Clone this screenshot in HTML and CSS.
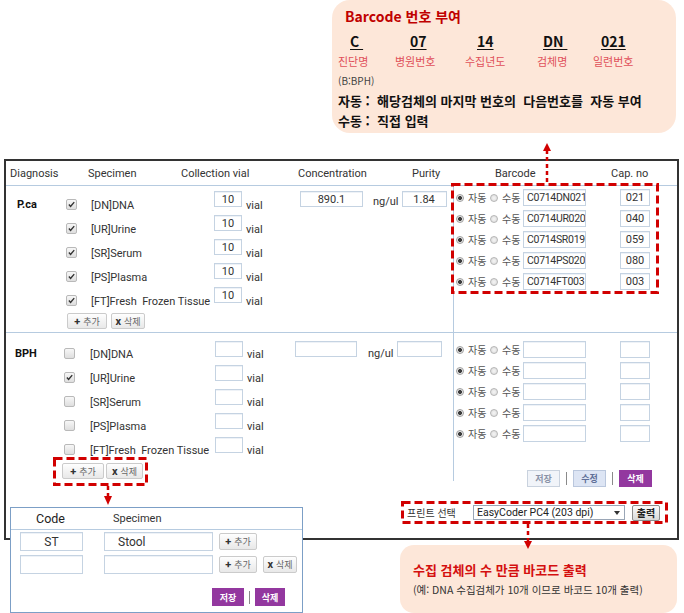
FILE: index.html
```html
<!DOCTYPE html>
<html lang="ko">
<head>
<meta charset="utf-8">
<title>Barcode 등록</title>
<link rel="stylesheet" href="styles.css">
</head>
<body>
<div class="page">
  <div class="callout-top">
    <div class="ct-title">Barcode 번호 부여</div>
    <div class="code-grid">
      <span class="code k1">C&nbsp;</span>
      <span class="code k2">07</span>
      <span class="code k3">14</span>
      <span class="code k4">DN&nbsp;</span>
      <span class="code k5">021</span>
      <span class="lbl">진단명</span>
      <span class="lbl">병원번호</span>
      <span class="lbl">수집년도</span>
      <span class="lbl">검체명</span>
      <span class="lbl">일련번호</span>
    </div>
    <div class="note">(B:BPH)</div>
    <div class="rule">자동 :  해당검체의 마지막 번호의  다음번호를  자동 부여</div>
    <div class="rule">수동 :  직접 입력</div>
  </div>

  <div class="frame">
    <div class="head">
      <span class="h-diag">Diagnosis</span>
      <span class="h-spec">Specimen</span>
      <span class="h-vial">Collection vial</span>
      <span class="h-conc">Concentration</span>
      <span class="h-pur">Purity</span>
      <span class="h-bc">Barcode</span>
      <span class="h-cap">Cap. no</span>
    </div>

    <div class="sec sec-pca">
      <div class="spec spec-pca">
        <div class="srow">
          <span class="cell diag">P.ca</span>
          <span class="cell"><span class="cb on"><svg viewBox="0 0 11 11"><path d="M2.3 5.6 L4.4 8 L8.8 2.6"/></svg></span></span>
          <span class="cell sname">[DN]DNA</span>
          <span class="cell vial"><input class="inp vin" value="10"><span class="unit">vial</span></span>
          <span class="cell conc"><input class="inp cin" value="890.1"><span class="ngul">ng/ul</span><input class="inp pin" value="1.84"></span>
        </div>
        <div class="srow">
          <span class="cell diag"></span>
          <span class="cell"><span class="cb on"><svg viewBox="0 0 11 11"><path d="M2.3 5.6 L4.4 8 L8.8 2.6"/></svg></span></span>
          <span class="cell sname">[UR]Urine</span>
          <span class="cell vial"><input class="inp vin" value="10"><span class="unit">vial</span></span>
        </div>
        <div class="srow">
          <span class="cell diag"></span>
          <span class="cell"><span class="cb on"><svg viewBox="0 0 11 11"><path d="M2.3 5.6 L4.4 8 L8.8 2.6"/></svg></span></span>
          <span class="cell sname">[SR]Serum</span>
          <span class="cell vial"><input class="inp vin" value="10"><span class="unit">vial</span></span>
        </div>
        <div class="srow">
          <span class="cell diag"></span>
          <span class="cell"><span class="cb on"><svg viewBox="0 0 11 11"><path d="M2.3 5.6 L4.4 8 L8.8 2.6"/></svg></span></span>
          <span class="cell sname">[PS]Plasma</span>
          <span class="cell vial"><input class="inp vin" value="10"><span class="unit">vial</span></span>
        </div>
        <div class="srow">
          <span class="cell diag"></span>
          <span class="cell"><span class="cb on"><svg viewBox="0 0 11 11"><path d="M2.3 5.6 L4.4 8 L8.8 2.6"/></svg></span></span>
          <span class="cell sname">[FT]Fresh&nbsp; Frozen Tissue</span>
          <span class="cell vial"><input class="inp vin" value="10"><span class="unit">vial</span></span>
        </div>
        <div class="btnrow">
          <span class="gbtn add"><b>+</b>추가</span>
          <span class="gbtn del"><b>x</b>삭제</span>
        </div>
      </div>
      <div class="bc bc-pca">
        <div class="bcrow"><span class="radio on"></span><span class="rl">자동</span><span class="radio"></span><span class="rl">수동</span><input class="inp bin" value="C0714DN021"><input class="inp capin" value="021"></div>
        <div class="bcrow"><span class="radio on"></span><span class="rl">자동</span><span class="radio"></span><span class="rl">수동</span><input class="inp bin" value="C0714UR020"><input class="inp capin" value="040"></div>
        <div class="bcrow"><span class="radio on"></span><span class="rl">자동</span><span class="radio"></span><span class="rl">수동</span><input class="inp bin" value="C0714SR019"><input class="inp capin" value="059"></div>
        <div class="bcrow"><span class="radio on"></span><span class="rl">자동</span><span class="radio"></span><span class="rl">수동</span><input class="inp bin" value="C0714PS020"><input class="inp capin" value="080"></div>
        <div class="bcrow"><span class="radio on"></span><span class="rl">자동</span><span class="radio"></span><span class="rl">수동</span><input class="inp bin" value="C0714FT003"><input class="inp capin" value="003"></div>
      </div>
    </div>

    <div class="sec-bph">
      <div class="bph-top">
        <div class="spec spec-bph">
          <div class="srow">
            <span class="cell diag">BPH</span>
            <span class="cell"><span class="cb"></span></span>
            <span class="cell sname">[DN]DNA</span>
            <span class="cell vial"><input class="inp vin" value=""><span class="unit">vial</span></span>
            <span class="cell conc"><input class="inp cin" value=""><span class="ngul">ng/ul</span><input class="inp pin" value=""></span>
          </div>
          <div class="srow">
            <span class="cell diag"></span>
            <span class="cell"><span class="cb on"><svg viewBox="0 0 11 11"><path d="M2.3 5.6 L4.4 8 L8.8 2.6"/></svg></span></span>
            <span class="cell sname">[UR]Urine</span>
            <span class="cell vial"><input class="inp vin" value=""><span class="unit">vial</span></span>
          </div>
          <div class="srow">
            <span class="cell diag"></span>
            <span class="cell"><span class="cb"></span></span>
            <span class="cell sname">[SR]Serum</span>
            <span class="cell vial"><input class="inp vin" value=""><span class="unit">vial</span></span>
          </div>
          <div class="srow">
            <span class="cell diag"></span>
            <span class="cell"><span class="cb"></span></span>
            <span class="cell sname">[PS]Plasma</span>
            <span class="cell vial"><input class="inp vin" value=""><span class="unit">vial</span></span>
          </div>
          <div class="srow">
            <span class="cell diag"></span>
            <span class="cell"><span class="cb"></span></span>
            <span class="cell sname">[FT]Fresh&nbsp; Frozen Tissue</span>
            <span class="cell vial"><input class="inp vin" value=""><span class="unit">vial</span></span>
          </div>
          <div class="btnrow">
            <span class="gbtn add"><b>+</b>추가</span>
            <span class="gbtn del"><b>x</b>삭제</span>
          </div>
        </div>
        <div class="bc bc-bph">
          <div class="bcrow"><span class="radio on"></span><span class="rl">자동</span><span class="radio"></span><span class="rl">수동</span><input class="inp bin" value=""><input class="inp capin" value=""></div>
          <div class="bcrow"><span class="radio on"></span><span class="rl">자동</span><span class="radio"></span><span class="rl">수동</span><input class="inp bin" value=""><input class="inp capin" value=""></div>
          <div class="bcrow"><span class="radio on"></span><span class="rl">자동</span><span class="radio"></span><span class="rl">수동</span><input class="inp bin" value=""><input class="inp capin" value=""></div>
          <div class="bcrow"><span class="radio on"></span><span class="rl">자동</span><span class="radio"></span><span class="rl">수동</span><input class="inp bin" value=""><input class="inp capin" value=""></div>
          <div class="bcrow"><span class="radio on"></span><span class="rl">자동</span><span class="radio"></span><span class="rl">수동</span><input class="inp bin" value=""><input class="inp capin" value=""></div>
          <div class="actions">
            <span class="abtn save">저장</span>
            <span class="sep"></span>
            <span class="abtn edit">수정</span>
            <span class="sep"></span>
            <span class="abtn remove">삭제</span>
          </div>
        </div>
      </div>
      <div class="print">
        <span class="plabel">프린트 선택</span>
        <span class="sel">EasyCoder PC4 (203 dpi)<span class="caret"></span></span>
        <span class="obtn">출력</span>
      </div>
    </div>
  </div>

  <div class="callout-bottom">
    <div class="cb-title">수집 검체의 수 만큼 바코드 출력</div>
    <div class="cb-sub">(예: DNA 수집검체가 10개 이므로 바코드 10개 출력)</div>
  </div>

  <div class="popup">
    <div class="pop-head">
      <span class="ph-code">Code</span>
      <span class="ph-spec">Specimen</span>
    </div>
    <div class="pop-row">
      <input class="inp pcode" value="ST">
      <input class="inp pspec" value="Stool">
      <span class="gbtn padd"><b>+</b>추가</span>
    </div>
    <div class="pop-row">
      <input class="inp pcode" value="">
      <input class="inp pspec" value="">
      <span class="gbtn padd"><b>+</b>추가</span>
      <span class="gbtn pdel"><b>x</b>삭제</span>
    </div>
    <div class="pop-actions">
      <span class="abtn remove psave">저장</span>
      <span class="sep"></span>
      <span class="abtn remove pdelete">삭제</span>
    </div>
  </div>

  <svg class="overlay" width="684" height="613" viewBox="0 0 684 613">
    <g class="dash-box">
      <rect x="452.5" y="184.5" width="205" height="108"/>
      <rect x="54.5" y="458.5" width="92" height="26"/>
      <rect x="402.5" y="502.5" width="264" height="20"/>
    </g>
    <g class="dash-line">
      <line x1="547" y1="150" x2="547" y2="183"/>
      <line x1="108" y1="486" x2="108" y2="497"/>
      <line x1="528" y1="524" x2="528" y2="541"/>
    </g>
    <g class="head-fill">
      <polygon points="543,151 551,151 547,143"/>
      <polygon points="104,496 112,496 108,505"/>
      <polygon points="524,541 532,541 528,549"/>
    </g>
  </svg>
</div>
</body>
</html>
```

FILE: styles.css
```css
* { box-sizing: border-box; }
html, body { margin: 0; padding: 0; background: #fff; }
body {
  font-family: Roboto, "Noto Sans CJK KR", sans-serif;
  color: #333;
}
.page { position: relative; width: 684px; height: 613px; overflow: hidden; }

/* ---------- top callout ---------- */
.callout-top {
  margin-left: 332px;
  width: 344px;
  height: 133px;
  background: #fde7d9;
  border-radius: 18px;
  padding: 6px 0 0 6px;
  font-family: "Noto Sans CJK KR", sans-serif;
}
.ct-title {
  margin-left: 7px;
  font-size: 14px;
  font-weight: 700;
  color: #c00000;
  line-height: 20px;
}
.code-grid {
  display: grid;
  grid-template-columns: 57px 70px 72px 56px auto;
  margin-top: 5px;
}
.code {
  font-size: 14px;
  font-weight: 700;
  color: #111;
  line-height: 20px;
  text-decoration: underline;
  text-underline-offset: 2px;
}
.k1 { padding-left: 12px; }
.k2 { padding-left: 15px; }
.k3 { padding-left: 12px; }
.k4 { padding-left: 6px; }
.k5 { padding-left: 8px; }
.lbl { font-size: 11px; color: #e0505a; line-height: 20px; }
.note { font-size: 10px; color: #444; line-height: 20px; }
.rule {
  font-size: 13px;
  font-weight: 700;
  color: #111;
  line-height: 20px;
  white-space: pre;
}

/* ---------- main frame ---------- */
.frame {
  margin: 26px 0 0 4px;
  width: 675px;
  height: 381px;
  border: 2px solid #333;
}
.head {
  display: flex;
  align-items: center;
  height: 25px;
  border-bottom: 1px solid #b6cbe0;
  font-size: 11px;
  color: #333;
}
.head span { display: block; }
.h-diag { width: 82px; padding-left: 4px; }
.h-spec { width: 93px; }
.h-vial { width: 117px; }
.h-conc { width: 114px; }
.h-pur { width: 83px; }
.h-bc { width: 116px; }

.sec { display: flex; }
.sec-pca { height: 147px; border-bottom: 1px solid #b6cbe0; }
.spec { width: 447px; flex: none; }
.spec-pca { padding-top: 5px; }
.spec-bph { padding-top: 8px; }

.srow { display: grid; height: 24px; }
.spec-pca .srow { grid-template-columns: 59px 23px 126px 86px 1fr; }
.spec-bph .srow { grid-template-columns: 57px 25px 127px 80px 1fr; }
.cell { display: flex; align-items: center; font-size: 11px; color: #333; }
.diag { font-weight: 700; color: #111; padding-left: 11px; }
.spec-bph .diag { padding-left: 9px; }
.sname { padding-left: 3px; padding-top: 2px; white-space: nowrap; }
.spec-bph .sname { padding-left: 2px; }

.cb {
  display: block;
  width: 11px;
  height: 11px;
  margin-left: 1px;
  border: 1px solid #b9b9b9;
  border-radius: 2px;
  background: linear-gradient(#f7f7f7, #dedede);
}
.cb svg { display: block; width: 9px; height: 9px; }
.cb path { fill: none; stroke: #333; stroke-width: 1.7; }

.inp {
  display: block;
  height: 16px;
  padding: 0;
  border: 1px solid #c5d3e2;
  background: #fff;
  font-family: Roboto, "Noto Sans CJK KR", sans-serif;
  font-size: 11px;
  color: #333;
  text-align: center;
  outline: none;
  box-shadow: inset 0 1px 0 #eef2f7;
}
.vin { width: 28px; margin-bottom: 10px; }
.spec-bph .vin { margin-bottom: 8px; }
.unit { margin-left: 4px; padding-top: 2px; }
.cin { width: 63px; margin-bottom: 10px; }
.pin { width: 45px; margin-left: 3px; margin-bottom: 10px; }
.ngul { margin-left: 10px; margin-bottom: 6px; }
.spec-bph .cin { width: 62px; margin-bottom: 8px; }
.spec-bph .pin { width: 45px; margin-bottom: 8px; }
.spec-bph .ngul { margin-left: 11px; margin-bottom: 0; }

.btnrow { display: flex; gap: 4px; margin: 2px 0 0 61px; }
.spec-bph .btnrow { margin: 2px 0 0 56px; gap: 2px; }
.gbtn {
  display: flex;
  align-items: center;
  justify-content: center;
  gap: 3px;
  height: 16px;
  border: 1px solid #cbcbcb;
  border-radius: 2px;
  background: linear-gradient(#fefefe, #e8e8e8);
  font-family: "Noto Sans CJK KR", sans-serif;
  font-size: 9px;
  color: #666;
}
.gbtn b { font-family: Roboto, sans-serif; font-size: 11px; color: #333; line-height: 1; }
.gbtn.add { width: 40px; }
.gbtn.del { width: 34px; }
.spec-bph .gbtn.add { width: 42px; }
.spec-bph .gbtn.del { width: 37px; }

/* barcode column */
.bc { flex: 1; border-left: 1px solid #b6cbe0; }
.bc-pca { padding-top: 1px; }
.bc-bph { padding-top: 6px; }
.bcrow { display: flex; align-items: center; height: 21px; }
.radio {
  display: block;
  width: 8px;
  height: 8px;
  margin-left: 2px;
  border-radius: 50%;
  border: 1px solid #b5b5b5;
  background: radial-gradient(circle, #f5f5f5 0, #d9d9d9 100%);
}
.radio.on {
  border-color: #a0a0a0;
  background: radial-gradient(circle, #3c3c3c 0 1.6px, #e6e6e6 2.3px);
}
.rl { width: 20px; margin-left: 4px; font-family: "Noto Sans CJK KR", sans-serif; font-size: 10px; color: #555; }
.bin {
  width: 63px;
  height: 17px;
  margin-left: 1px;
  text-align: left;
  padding-left: 3px;
  font-size: 10.5px;
  letter-spacing: -0.3px;
}
.capin { width: 30px; height: 17px; margin-left: 34px; }

.actions { display: flex; align-items: center; justify-content: flex-end; padding-right: 25px; margin-top: 26px; }
.abtn {
  display: flex;
  align-items: center;
  justify-content: center;
  width: 33px;
  height: 17px;
  font-family: "Noto Sans CJK KR", sans-serif;
  font-size: 9px;
  font-weight: 700;
}
.save { background: #f1f4f9; border: 1px solid #c9d2de; color: #8a93a8; }
.edit { background: #dde5f4; border: 1px solid #bac7dd; color: #5f6f98; }
.remove { background: #93389f; color: #fff; }
.sep { display: block; width: 1px; height: 13px; background: #8a8a8a; margin: 0 6px; }

.sec-bph { height: 205px; }
.bph-top { display: flex; height: 148px; }

.print {
  display: flex;
  align-items: center;
  margin: 21px 0 0 396px;
  width: 265px;
  height: 21px;
  padding-left: 5px;
}
.plabel { width: 66px; font-family: "Noto Sans CJK KR", sans-serif; font-size: 10px; color: #333; }
.sel {
  display: flex;
  align-items: center;
  width: 152px;
  height: 15px;
  padding-left: 3px;
  border: 1px solid #9aa6b6;
  background: #fff;
  font-size: 10.5px;
  color: #222;
}
.caret {
  margin-left: auto;
  margin-right: 4px;
  width: 0;
  height: 0;
  border-left: 3.5px solid transparent;
  border-right: 3.5px solid transparent;
  border-top: 4px solid #333;
}
.obtn {
  display: flex;
  align-items: center;
  justify-content: center;
  width: 28px;
  height: 16px;
  margin-left: 7px;
  border: 1px solid #8c8c8c;
  border-radius: 2px;
  background: linear-gradient(#fbfbfb, #d9d9d9);
  font-family: "Noto Sans CJK KR", sans-serif;
  font-size: 10px;
  font-weight: 700;
  color: #222;
}

/* ---------- bottom callout ---------- */
.callout-bottom {
  margin: 5px 0 0 400px;
  width: 277px;
  height: 68px;
  background: #fde7d9;
  border-radius: 14px;
  padding: 15px 0 0 13px;
  font-family: "Noto Sans CJK KR", sans-serif;
}
.cb-title { font-size: 13px; font-weight: 700; color: #d40f0f; line-height: 20px; }
.cb-sub { font-size: 10.5px; color: #333; line-height: 20px; }

/* ---------- popup ---------- */
.popup {
  position: absolute;
  left: 10px;
  top: 507px;
  width: 293px;
  height: 106px;
  border: 1px solid #7c9fc6;
  background: #fff;
}
.pop-head {
  display: flex;
  align-items: center;
  height: 22px;
  border-bottom: 1px solid #b6cbe0;
}
.ph-code { width: 102px; padding-left: 25px; font-size: 12.5px; color: #222; }
.ph-spec { font-size: 11px; color: #333; }
.pop-row { display: flex; align-items: center; height: 23px; }
.pop-row:first-of-type { margin-top: 1px; }
.pcode { width: 63px; height: 19px; margin-left: 9px; font-size: 12px; }
.pspec { width: 109px; height: 19px; margin-left: 21px; text-align: left; padding-left: 13px; font-size: 12px; }
.padd { width: 38px; height: 17px; margin-left: 6px; }
.pdel { width: 34px; height: 17px; margin-left: 6px; }
.pop-actions { display: flex; align-items: center; margin: 12px 0 0 201px; }
.psave { width: 32px; height: 18px; }
.pdelete { width: 30px; height: 18px; }
.pop-actions .sep { margin: 0 5px; }

/* ---------- overlay annotations ---------- */
.overlay { position: absolute; left: 0; top: 0; pointer-events: none; }
.dash-box rect { fill: none; stroke: #d10000; stroke-width: 3; stroke-dasharray: 8 4; }
.dash-line line { stroke: #d10000; stroke-width: 2.5; stroke-dasharray: 4 3; }
.head-fill polygon { fill: #d10000; }
```
